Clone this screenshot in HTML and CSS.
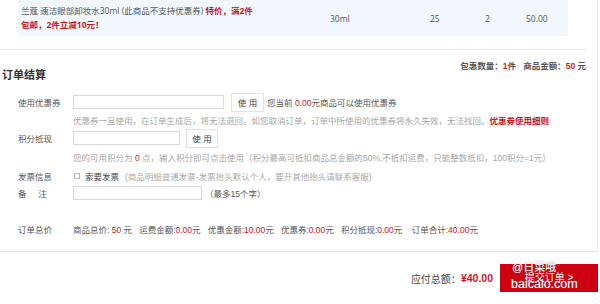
FILE: index.html
```html
<!DOCTYPE html>
<html lang="zh-CN">
<head>
    <meta charset="UTF-8">
    <title>订单结算</title>
    <link rel="stylesheet" href="styles.css">
</head>
<body>
    <div class="page">
        <div class="goods-wrap">
            <div class="goods">
                <div class="g-name">兰蔻 速洁眼部卸妆水30ml (此商品不支持优惠券) <b class="red">特价，满2件<br>包邮，2件立减10元！</b></div>
                <div class="g-spec">30ml</div>
                <div class="g-price">25</div>
                <div class="g-qty">2</div>
                <div class="g-total">50.00</div>
            </div>
        </div>

        <div class="summary">包惠数量：<span class="red">1</span>件&nbsp;&nbsp;&nbsp;商品金额：<span class="red">50</span> 元</div>

        <h2 class="title">订单结算</h2>

        <div class="form">
            <div class="row">
                <span class="label">使用优惠券</span>
                <input class="inp inp-coupon">
                <button class="btn">使 用</button>
                <span class="note">您当前 <span class="red">0.00</span>元商品可以使用优惠券</span>
            </div>
            <div class="row hint">
                <span class="label"></span>
                <span>优惠券一旦使用，在订单生成后，将无法退回。如您取消订单，订单中所使用的优惠券将永久失效，无法找回。<b class="red">优惠券使用细则</b></span>
            </div>
            <div class="row">
                <span class="label">积分抵现</span>
                <input class="inp inp-point">
                <button class="btn">使 用</button>
            </div>
            <div class="row hint hint-tall">
                <span class="label"></span>
                <span>您的可用积分为 <span class="red">0</span> 点，输入积分即可点击使用（积分最高可抵扣商品总金额的50%,不抵扣运费，只能整数抵扣，100积分=1元）</span>
            </div>
            <div class="row row-short">
                <span class="label">发票信息</span>
                <span class="check"></span>
                <span class="dark">索要发票</span>
                <span class="gray">(商品明细普通发票-发票抬头默认个人，要开其他抬头请联系客服)</span>
            </div>
            <div class="row">
                <span class="label">备&nbsp;&nbsp;&nbsp;&nbsp;&nbsp;注</span>
                <input class="inp inp-memo">
                <span class="note">（最多15个字）</span>
            </div>
            <div class="row total-row">
                <span class="label">订单总价</span>
                <span class="totals">商品总价: <span class="red">50</span> 元&nbsp;&nbsp;&nbsp;运费金额:<span class="red">0.00</span>元&nbsp;&nbsp;&nbsp;优惠金额:<span class="red">10.00</span>元&nbsp;&nbsp;&nbsp;优惠券:<span class="red">0.00</span>元&nbsp;&nbsp;&nbsp;积分抵现:<span class="red">0.00</span>元&nbsp;&nbsp;&nbsp;&nbsp;订单合计:<span class="red">40.00</span>元</span>
            </div>
        </div>
    </div>

    <div class="pay">
        <span class="pay-label">应付总额：</span>
        <span class="pay-sum">¥40.00</span>
        <div class="submit">
            提交订单 &gt;
            <span class="mark mark-top">@日菜哦</span>
            <span class="mark mark-bottom">baicalo.com</span>
        </div>
    </div>
</body>
</html>
```
FILE: styles.css
```css
/* 全体 */
body {
    margin: 0;
    font-family: "Liberation Sans", "Noto Sans CJK SC", sans-serif;
    font-size: 8.5px;
    color: #555;
    background: #fff;
}

.red {
    color: #d0141c;
}

/* 上のエリア */
.page {
    width: 597px;
    height: 251px;
    border-right: 1px solid #ebebeb;
    border-bottom: 1px solid #e6e6e6;
}

.goods-wrap {
    width: 586px;
    height: 49px;
    border-bottom: 1px solid #e8e8e8;
}

.goods {
    margin-left: 18px;
    width: 550px;
    height: 36px;
    background-color: #f2f8fd;
    display: grid;
    grid-template-columns: 312px 100px 55px 41px 1fr;
    align-items: center;
    font-family: "Open Sans", "Noto Sans CJK SC", sans-serif;
}

.g-name {
    padding-left: 3px;
    line-height: 14px;
    white-space: nowrap;
}

.summary {
    width: 586px;
    text-align: right;
    font-weight: bold;
    margin-top: 10px;
    line-height: 12px;
}

.title {
    margin: -3px 0 0 2px;
    font-size: 11px;
    line-height: 12px;
    color: #333;
}

/* フォーム */
.form {
    margin-top: 12px;
}

.row {
    display: flex;
    align-items: center;
    height: 18px;
}

.row-short {
    height: 17px;
}

.label {
    width: 55px;
    padding-left: 18px;
    flex-shrink: 0;
}

.inp {
    box-sizing: border-box;
    height: 14px;
    margin: 0;
    padding: 0;
    border: 1px solid #d9d9d9;
    background: #fff;
}

.inp-coupon { width: 151px; }
.inp-point { width: 107px; }
.inp-memo { width: 129px; }

.btn {
    box-sizing: border-box;
    height: 19px;
    width: 33px;
    margin-left: 7px;
    padding: 0;
    border: 1px solid #e3e3e3;
    background: #fff;
    font-family: inherit;
    font-size: 8.5px;
    color: #444;
}

.row .inp-point + .btn {
    margin-left: 6px;
    width: 32px;
}

.note {
    margin-left: 3px;
}

.hint {
    color: #a6a6a6;
}

.hint-tall {
    height: 20px;
}

.check {
    box-sizing: border-box;
    width: 6px;
    height: 6px;
    border: 1px solid #bbb;
    margin-left: 1px;
    margin-right: 5px;
}

.dark {
    color: #444;
}

.gray {
    color: #aaa;
    margin-left: 6px;
}

.total-row {
    margin-top: 18px;
}

/* 支払い */
.pay {
    display: flex;
    justify-content: flex-end;
    align-items: center;
    margin-top: 12px;
    padding-right: 2px;
}

.pay-label {
    font-size: 10px;
    color: #444;
}

.pay-sum {
    font-size: 10.5px;
    font-weight: bold;
    color: #d0141c;
}

.submit {
    position: relative;
    width: 98px;
    height: 28px;
    margin-left: 7px;
    background-color: #cc0010;
    color: #fff;
    font-size: 10px;
    line-height: 28px;
    text-align: center;
}

/* 透かし */
.mark {
    position: absolute;
    color: #fff;
    text-shadow: 0 0 1px #888;
    white-space: nowrap;
    line-height: 1;
}

.mark-top {
    left: 12px;
    top: -2px;
    font-size: 11px;
}

.mark-bottom {
    left: 11px;
    top: 14px;
    font-size: 12.5px;
}
```
